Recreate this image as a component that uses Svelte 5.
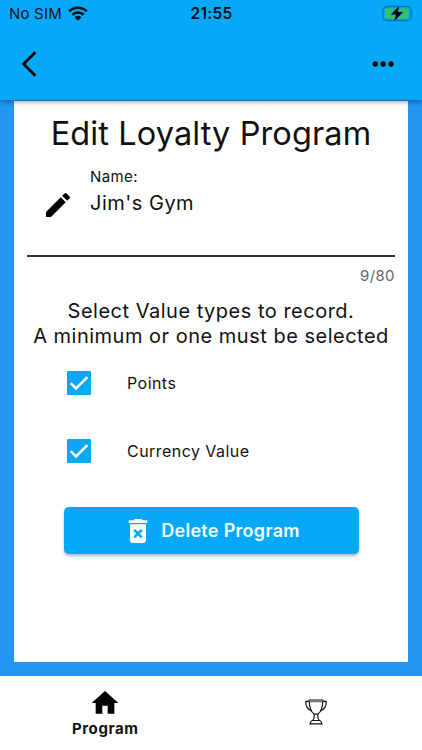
<script lang="ts">
	let name = "Jim's Gym";
	const maxLength = 80;

	let valueTypes = [
		{ label: 'Points', checked: true },
		{ label: 'Currency Value', checked: true }
	];

	function toggle(i: number) {
		valueTypes[i].checked = !valueTypes[i].checked;
	}
</script>

<div class="app">
	<header>
		<div class="statusBar">
			<div class="carrier">
				<span>No SIM</span>
				<svg width="20" height="15" viewBox="0 0 20 15">
					<g fill="none" stroke="#04121b" stroke-width="2.7">
						<path d="M1.2 5.4a12.4 12.4 0 0 1 17.6 0" />
						<path d="M4.4 8.8a8 8 0 0 1 11.2 0" />
					</g>
					<path d="M6.6 11.2a4.8 4.8 0 0 1 6.8 0L10 14.8z" fill="#04121b" />
				</svg>
			</div>
			<div class="clock">21:55</div>
			<div class="battery">
				<svg width="32" height="18" viewBox="0 0 32 18">
					<rect x="1" y="1.5" width="28" height="14" rx="3.8" fill="none" stroke="#0874a8" stroke-width="1.3" />
					<rect x="3" y="3.5" width="23.5" height="10" rx="2" fill="#35c35a" />
					<path d="M30.5 6.300q1.500 2.200 0 4.400z" fill="#0874a8" />
					<path d="M17.500.5L9 9.500h5.200L12 16.500l9-9.400h-5.300z" fill="#000" stroke="#05a9f7" stroke-width="1.4" paint-order="stroke" />
				</svg>
			</div>
		</div>
		<div class="toolbar">
			<button class="iconButton" aria-label="Back">
				<svg width="18" height="28" viewBox="0 0 18 28">
					<path d="M15.400 2.200L3.600 14l11.800 11.800" fill="none" stroke="#000" stroke-width="2.9" />
				</svg>
			</button>
			<button class="iconButton" aria-label="More">
				<svg width="22" height="6" viewBox="0 0 22 6">
					<circle cx="3.3" cy="3" r="2.65" />
					<circle cx="11.2" cy="3" r="2.65" />
					<circle cx="19.1" cy="3" r="2.65" />
				</svg>
			</button>
		</div>
	</header>

	<main>
		<div class="card">
			<h1>Edit Loyalty Program</h1>

			<div class="field">
				<svg class="pencil" width="32" height="32" viewBox="0 0 24 24">
					<path d="M3 17.25V21h3.75L17.81 9.94l-3.75-3.75L3 17.25zM20.71 7.04a.996.996 0 0 0 0-1.41l-2.34-2.34a.996.996 0 0 0-1.41 0l-1.83 1.83 3.75 3.75 1.83-1.83z" />
				</svg>
				<div class="fieldText">
					<div class="label">Name:</div>
					<div class="value">{name}</div>
				</div>
			</div>
			<div class="counter">{name.length}/{maxLength}</div>

			<p>Select Value types to record.<br />A minimum or one must be selected</p>

			<div class="options">
				{#each valueTypes as type, i}
					<button class="option" on:click={() => toggle(i)}>
						<span class="checkbox" class:checked={type.checked}>
							{#if type.checked}
								<svg width="24" height="24" viewBox="0 0 24 24">
									<path d="M3.7 12.2l5.3 5.2L20.4 6.2" fill="none" stroke="#fff" stroke-width="2.5" />
								</svg>
							{/if}
						</span>
						<span class="optionLabel">{type.label}</span>
					</button>
				{/each}
			</div>

			<button class="delete">
				<svg width="32" height="32" viewBox="0 0 24 24" fill="#fff">
					<path d="M6 19c0 1.1.9 2 2 2h8c1.1 0 2-.9 2-2V7H6v12zm2.46-7.12l1.41-1.41L12 12.59l2.12-2.12 1.41 1.41L13.41 14l2.12 2.12-1.41 1.41L12 15.41l-2.12 2.12-1.41-1.41L10.59 14l-2.13-2.12zM15.5 4l-1-1h-5l-1 1H5v2h14V4z" />
				</svg>
				<span>Delete Program</span>
			</button>
		</div>
	</main>

	<nav>
		<div class="tab">
			<svg width="32" height="32" viewBox="0 0 24 24">
				<path d="M10 20v-6h4v6h5v-8h3L12 3 2 12h3v8z" />
			</svg>
			<span>Program</span>
		</div>
		<div class="tab">
			<svg width="24" height="30" viewBox="0 0 24 30" fill="none" stroke="#111" stroke-width="1.2">
				<path d="M5.2 2h13.6c0 6.8-1.8 12-5 14.2h-3.6C7 14 5.2 8.8 5.2 2z" />
				<path d="M5.2 3.3h13.6" stroke="#777" stroke-width="2" />
				<path d="M5.2 3.3H1.8c-.2 5 2 8.500 6.200 9.500M18.800 3.300h3.400c.2 5-2 8.500-6.200 9.500" />
				<path d="M10.300 16.200c.2 3-.4 4.800-1.600 6.300h6.600c-1.200-1.500-1.800-3.300-1.600-6.300M8.300 22.500h7.400c1.400.5 2.200 1.500 2.200 3.300H6.100c0-1.800.8-2.800 2.200-3.300z" />
			</svg>
		</div>
	</nav>
</div>

<style>
	:global(body) {
		margin: 0;
	}

	.app {
		display: flex;
		flex-direction: column;
		height: 750px;
		font-family: Inter, 'Liberation Sans', sans-serif;
		color: #111;
		background-color: #2196f3;
	}

	button {
		padding: 0;
		border: none;
		background: none;
		font-family: inherit;
		color: inherit;
	}

	svg {
		display: block;
		flex: none;
	}

	header {
		position: relative;
		z-index: 1;
		box-sizing: border-box;
		height: 100px;
		background-color: #05a9f7;
		box-shadow: 0 2px 5px rgba(0, 0, 0, 0.35);
	}

	.statusBar {
		display: grid;
		grid-template-columns: 1fr auto 1fr;
		align-items: center;
		height: 27px;
		padding: 0 8px 0 9px;
		font-size: 15px;
		color: #04121b;
	}

	.carrier {
		display: flex;
		align-items: center;
		gap: 6px;
		letter-spacing: 0.2px;
	}

	.clock {
		font-size: 15.5px;
		font-weight: 600;
		letter-spacing: 0.3px;
	}

	.battery {
		justify-self: end;
	}

	.toolbar {
		display: flex;
		justify-content: space-between;
		align-items: center;
		height: 73px;
		padding: 0 28px 0 20px;
	}

	main {
		flex: 1;
		padding: 1px 14px 14px;
	}

	.card {
		box-sizing: border-box;
		height: 561px;
		padding: 13px 13px 0;
		background-color: #fff;
	}

	h1 {
		margin: 0;
		font-size: 32.5px;
		font-weight: 400;
		line-height: 40px;
		letter-spacing: 0.1px;
		text-align: center;
		white-space: nowrap;
	}

	.field {
		display: flex;
		box-sizing: border-box;
		height: 103px;
		padding: 13px 0 0 15px;
		border-bottom: 2px solid #333;
	}

	.pencil {
		margin-top: 22px;
	}

	.fieldText {
		margin-left: 16px;
	}

	.label {
		font-size: 15px;
		line-height: 20px;
		letter-spacing: 0.4px;
	}

	.value {
		margin-top: 3px;
		font-size: 20px;
		line-height: 26px;
		letter-spacing: 0.5px;
	}

	.counter {
		margin-top: 10px;
		font-size: 15px;
		line-height: 18px;
		letter-spacing: 0.4px;
		text-align: right;
		color: #666;
	}

	p {
		margin: 14px -10px 0;
		font-size: 20px;
		line-height: 25px;
		letter-spacing: 0.5px;
		text-align: center;
		white-space: nowrap;
	}

	.options {
		display: flex;
		flex-direction: column;
		gap: 44px;
		margin: 22px 0 0 40px;
	}

	.option {
		display: flex;
		align-items: center;
		gap: 36px;
		height: 24px;
	}

	.checkbox {
		box-sizing: border-box;
		width: 24px;
		height: 24px;
		border: 2px solid #666;
		border-radius: 1px;
	}

	.checkbox.checked {
		border: none;
		background-color: #05a9f7;
	}

	.optionLabel {
		padding-bottom: 1px;
		font-size: 16px;
		letter-spacing: 0.45px;
	}

	.delete {
		display: flex;
		justify-content: center;
		align-items: center;
		gap: 7px;
		width: 295px;
		height: 47px;
		margin: 44px auto 0;
		border-radius: 5px;
		background-color: #05a9f7;
		box-shadow: 0 2px 3px rgba(0, 0, 0, 0.3);
		font-size: 18px;
		font-weight: 600;
		letter-spacing: 0.3px;
		color: #f4fcff;
	}

	nav {
		display: grid;
		grid-template-columns: 1fr 1fr;
		height: 74px;
		padding-right: 1px;
		background-color: #fff;
	}

	.tab {
		display: flex;
		flex-direction: column;
		align-items: center;
		justify-content: center;
		font-size: 15px;
		font-weight: 700;
		line-height: 20px;
		letter-spacing: 0.6px;
	}
</style>
